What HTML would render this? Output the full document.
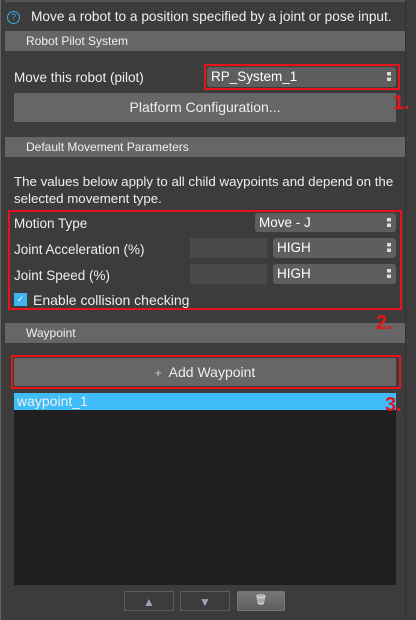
<!DOCTYPE html>
<html><head><style>
*{margin:0;padding:0;box-sizing:border-box}
body{width:416px;height:620px;background:#3c3c3c;font-family:"Liberation Sans",sans-serif;color:#eee;position:relative;overflow:hidden;font-size:13.5px}
.a{position:absolute}
.hdr{position:absolute;left:5px;width:400px;height:20px;background:#666;font-size:12px;padding-left:21px;line-height:20px;color:#f0f0f0}
.sel{position:absolute;background:#5e5e5e;border-radius:3px;line-height:19px;padding-left:4px;font-size:13.5px;color:#fff}
.sel:after{content:"";position:absolute;right:5px;top:5px;width:4px;height:9px;background:linear-gradient(#ddd 0 40%,transparent 40% 60%,#ddd 60%)}
.inp{position:absolute;background:#4a4a4a;width:77px;height:20px}
.red{position:absolute;border:2px solid #e8141c}
.num{position:absolute;color:#e8141c;font-weight:bold;font-size:20px;z-index:5}
.lbl{position:absolute;left:14px;font-size:13.5px}
.bb{position:absolute;top:591px;height:20px;border:1px solid #5c5c5c;background:#3c3c3c}
</style></head><body>
<div class="a" style="left:0;top:0;width:1px;height:620px;background:#666"></div>
<div class="a" style="left:5px;top:0;width:400px;height:2px;background:#555"></div>
<div class="a" style="left:405px;top:0;width:1px;height:620px;background:#333"></div>
<div class="a" style="left:7px;top:11px;width:13px;height:13px;border:1px solid #3fa9e0;border-radius:50%;color:#3fa9e0;font-size:9px;text-align:center;line-height:11px">?</div>
<div class="a" style="left:31px;top:9px;font-size:13.7px">Move a robot to a position specified by a joint or pose input.</div>
<div class="hdr" style="top:31px">Robot Pilot System</div>
<div class="lbl" style="top:70px">Move this robot (pilot)</div>
<div class="sel" style="left:207px;top:67px;width:189px;height:20px">RP_System_1</div>
<div class="red" style="left:204px;top:64px;width:196px;height:26px"></div>
<div class="a" style="left:14px;top:93px;width:382px;height:29px;background:#666;text-align:center;line-height:29px;font-size:14px">Platform Configuration...</div>
<div class="num" style="left:393px;top:92px">1.</div>
<div class="hdr" style="top:137px">Default Movement Parameters</div>
<div class="a" style="left:14px;top:173px;line-height:17px;width:392px;font-size:13.3px">The values below apply to all child waypoints and depend on the selected movement type.</div>
<div class="lbl" style="top:216px">Motion Type</div>
<div class="sel" style="left:255px;top:213px;width:141px;height:19px">Move - J</div>
<div class="lbl" style="top:242px">Joint Acceleration (%)</div>
<div class="inp" style="left:190px;top:238px"></div>
<div class="sel" style="left:273px;top:238px;width:123px;height:20px">HIGH</div>
<div class="lbl" style="top:268px">Joint Speed (%)</div>
<div class="inp" style="left:190px;top:264px"></div>
<div class="sel" style="left:273px;top:264px;width:123px;height:20px">HIGH</div>
<div class="a" style="left:14px;top:293px;width:13px;height:13px;background:#3fb5ef;color:#fff;font-size:9px;text-align:center;line-height:13px">✓</div>
<div class="a" style="left:33px;top:292px;font-size:14px">Enable collision checking</div>
<div class="red" style="left:8px;top:210px;width:394px;height:100px"></div>
<div class="num" style="left:376px;top:312px">2.</div>
<div class="hdr" style="top:323px">Waypoint</div>
<div class="a" style="left:14px;top:358px;width:382px;height:28px;background:#666;text-align:center;line-height:28px;font-size:14px"><span style="color:#ccc;font-size:12px">+</span>&nbsp; Add Waypoint</div>
<div class="red" style="left:11px;top:355px;width:390px;height:34px"></div>
<div class="a" style="left:14px;top:393px;width:382px;height:192px;background:#1f1f1f"></div>
<div class="a" style="left:14px;top:393px;width:382px;height:17px;background:#3fbdf8;padding-left:3px;line-height:17px;font-size:14px">waypoint_1</div>
<div class="num" style="left:385px;top:394px">3.</div>
<div class="bb" style="left:124px;width:50px;text-align:center;color:#9aa6b8;font-size:12px;line-height:20px">▲</div>
<div class="bb" style="left:180px;width:50px;text-align:center;color:#9aa6b8;font-size:12px;line-height:20px">▼</div>
<div class="bb" style="left:237px;width:48px;background:linear-gradient(#777,#5e5e5e);border-color:#777;border-radius:2px;text-align:center;font-size:10px;line-height:18px;color:#eee">🗑</div>
</body></html>
